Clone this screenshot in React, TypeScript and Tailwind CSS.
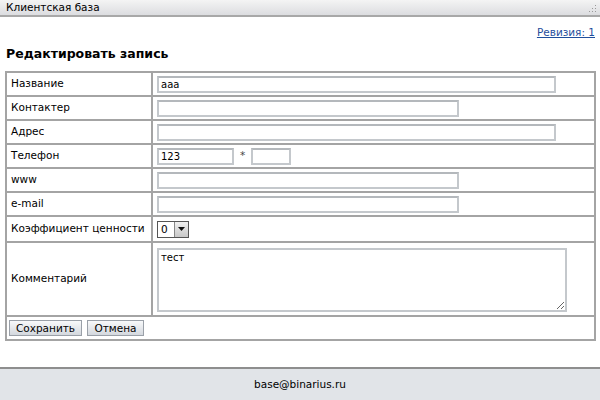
const inputCls =
  'h-[17px] border-2 border-[#c4c8cc] border-t-[#b4b8bc] bg-white px-[2px] text-[10px] leading-[13px] text-black outline-none';

const Cell = ({ children, className = '' }: { children: React.ReactNode; className?: string }) => (
  <td className={`border-2 border-[#a4a4a4] px-[4px] align-middle whitespace-nowrap ${className}`}>{children}</td>
);

export default function App() {
  return (
    <div className="flex h-[400px] w-[600px] flex-col bg-white text-[10.5px] text-black" style={{ fontFamily: '"DejaVu Sans", Verdana, sans-serif' }}>
      {/* title bar */}
      <div className="flex h-[17px] items-center justify-between border-b-2 border-[#a8a8a8] bg-gradient-to-b from-[#f4f4f4] to-[#dcdde0] pl-[6px] pr-[3px]">
        <span className="text-[10.5px] leading-none">Клиентская база</span>
        <svg width="10" height="12" viewBox="0 0 10 12" className="mt-[2px]">
          {[
            [8, 2], [8, 5], [5, 5], [8, 8], [5, 8], [2, 8],
          ].map(([x, y], i) => (
            <rect key={i} x={x} y={y} width="1" height="1" fill="#9a9a9a" />
          ))}
        </svg>
      </div>

      <div className="flex-1 px-[5px]">
        <div className="mt-[8px] flex justify-end">
          <a className="text-[10.5px] leading-[14px] text-[#1f4e9c] underline">Ревизия: 1</a>
        </div>
        <h2 className="mt-[7px] pl-[1px] text-[12.5px] font-bold leading-[16px]">Редактировать запись</h2>

        <table className="mt-[9px] w-[591px] border-collapse border-2 border-[#a4a4a4] text-[10.5px]">
          <tbody>
            <tr className="h-[24px]">
              <Cell className="w-[146px]">Название</Cell>
              <Cell><input className={`${inputCls} w-[399px]`} defaultValue="aaa" /></Cell>
            </tr>
            <tr className="h-[24px]">
              <Cell>Контактер</Cell>
              <Cell><input className={`${inputCls} w-[302px]`} /></Cell>
            </tr>
            <tr className="h-[24px]">
              <Cell>Адрес</Cell>
              <Cell><input className={`${inputCls} w-[399px]`} /></Cell>
            </tr>
            <tr className="h-[24px]">
              <Cell>Телефон</Cell>
              <Cell>
                <div className="flex items-center">
                  <input className={`${inputCls} w-[77px]`} defaultValue="123" />
                  <span className="mx-[6px] text-[#444]">*</span>
                  <input className={`${inputCls} w-[40px]`} />
                </div>
              </Cell>
            </tr>
            <tr className="h-[24px]">
              <Cell>www</Cell>
              <Cell><input className={`${inputCls} w-[302px]`} /></Cell>
            </tr>
            <tr className="h-[24px]">
              <Cell>e-mail</Cell>
              <Cell><input className={`${inputCls} w-[302px]`} /></Cell>
            </tr>
            <tr className="h-[26px]">
              <Cell>Коэффициент ценности</Cell>
              <Cell>
                <div className="flex h-[17px] w-[32px] items-stretch border border-[#555] bg-white">
                  <span className="flex-1 pl-[3px] text-[10.5px] leading-[15px]">0</span>
                  <span className="flex w-[14px] items-center justify-center border-l border-[#888] bg-gradient-to-b from-[#f0f0f0] to-[#c8c8c8]">
                    <svg width="7" height="4" viewBox="0 0 7 4"><path d="M0 0h7L3.5 4z" fill="#111" /></svg>
                  </span>
                </div>
              </Cell>
            </tr>
            <tr className="h-[74px]">
              <Cell>Комментарий</Cell>
              <Cell>
                <textarea
                  className="mt-[1px] block h-[64px] w-[410px] resize border-2 border-[#c4c8cc] px-[2px] py-[1px] text-[10px] leading-[13px] outline-none"
                  defaultValue="тест"
                />
              </Cell>
            </tr>
            <tr className="h-[24px]">
              <td colSpan={2} className="border-2 border-[#a4a4a4] px-[2px] align-middle">
                <div className="flex gap-[5px]">
                  <button className="h-[16px] w-[73px] border border-[#9aa0a8] bg-gradient-to-b from-[#f8f9fa] to-[#d4d8de] text-[10.5px] leading-none">Сохранить</button>
                  <button className="h-[16px] w-[57px] border border-[#9aa0a8] bg-gradient-to-b from-[#f8f9fa] to-[#d4d8de] text-[10.5px] leading-none">Отмена</button>
                </div>
              </td>
            </tr>
          </tbody>
        </table>
      </div>

      <div className="flex h-[33px] items-center justify-center border-t-2 border-[#8e8e8e] bg-[#e1e4e8]">
        <span className="text-[10.5px]">base@binarius.ru</span>
      </div>
    </div>
  );
}
